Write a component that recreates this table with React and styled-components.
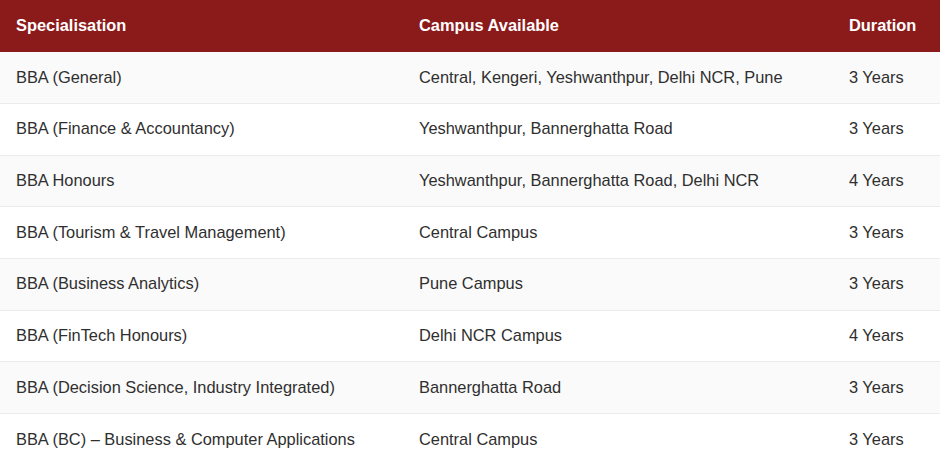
import React from "react";
import styled, { createGlobalStyle } from "styled-components";

const Global = createGlobalStyle`
  html, body { margin: 0; padding: 0; background: #ffffff; }
  body { font-family: "Liberation Sans", Arial, sans-serif; }
`;

const Table = styled.table`
  width: 940px;
  border-collapse: collapse;
  font-family: "Liberation Sans", Arial, sans-serif;
  font-size: 16.4px;
  color: #2f2f2f;
`;

const HeadRow = styled.tr`
  background: #8b1a1a;
`;

const Th = styled.th`
  height: 52px;
  box-sizing: border-box;
  padding: 0 16px 2px;
  text-align: left;
  font-weight: 700;
  color: #ffffff;
  width: ${(p) => p.$w || "auto"};
`;

const Row = styled.tr`
  background: ${(p) => (p.$odd ? "#fafafa" : "#ffffff")};
  border-top: 1px solid #ebebeb;
  &:first-child { border-top: none; }
`;

const Td = styled.td`
  height: 51.67px;
  box-sizing: border-box;
  padding: 0 16px 2px;
  line-height: 20px;
  vertical-align: middle;
`;

const rows = [
  ["BBA (General)", "Central, Kengeri, Yeshwanthpur, Delhi NCR, Pune", "3 Years"],
  ["BBA (Finance & Accountancy)", "Yeshwanthpur, Bannerghatta Road", "3 Years"],
  ["BBA Honours", "Yeshwanthpur, Bannerghatta Road, Delhi NCR", "4 Years"],
  ["BBA (Tourism & Travel Management)", "Central Campus", "3 Years"],
  ["BBA (Business Analytics)", "Pune Campus", "3 Years"],
  ["BBA (FinTech Honours)", "Delhi NCR Campus", "4 Years"],
  ["BBA (Decision Science, Industry Integrated)", "Bannerghatta Road", "3 Years"],
  ["BBA (BC) – Business & Computer Applications", "Central Campus", "3 Years"],
];

export default function App() {
  return (
    <>
      <Global />
      <Table>
        <thead>
          <HeadRow>
            <Th $w="403px">Specialisation</Th>
            <Th $w="430px">Campus Available</Th>
            <Th>Duration</Th>
          </HeadRow>
        </thead>
        <tbody>
          {rows.map((r, i) => (
            <Row key={i} $odd={i % 2 === 0}>
              <Td>{r[0]}</Td>
              <Td>{r[1]}</Td>
              <Td>{r[2]}</Td>
            </Row>
          ))}
        </tbody>
      </Table>
    </>
  );
}
